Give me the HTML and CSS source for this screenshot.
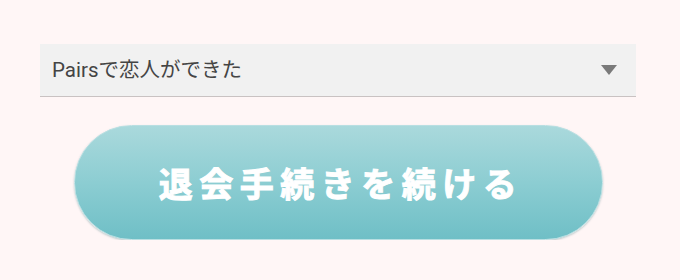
FILE: index.html
```html
<!DOCTYPE html>
<html lang="ja">
<head>
<meta charset="utf-8">
<link rel="stylesheet" href="styles.css">
</head>
<body>
<div class="wrap">
  <div class="select">
    <span class="select-text">Pairsで恋人ができた</span>
    <span class="arrow"></span>
  </div>
  <button class="btn">退会手続きを続ける</button>
</div>
</body>
</html>
```
FILE: styles.css
```css
html, body {
  margin: 0;
  padding: 0;
  background: #fff6f6;
}
.wrap {
  width: 596px;
  padding: 44px 0 0 40px;
  display: flex;
  flex-direction: column;
  align-items: center;
}
.select {
  box-sizing: border-box;
  width: 596px;
  height: 53px;
  background: #f1f1f1;
  border-bottom: 1px solid #c9c2c2;
  display: flex;
  align-items: center;
  justify-content: space-between;
  padding: 0 19px 0 12px;
}
.select-text {
  font-family: Roboto, "Noto Sans CJK JP", sans-serif;
  font-size: 20.5px;
  color: #444444;
  line-height: 1;
  margin-top: 1px;
}
.arrow {
  width: 0;
  height: 0;
  border-left: 8.5px solid transparent;
  border-right: 8.5px solid transparent;
  border-top: 10px solid #7a7a7a;
}
.btn {
  box-sizing: border-box;
  margin-top: 28px;
  width: 529px;
  height: 115px;
  border-radius: 58px;
  border: 1px solid #b9dfe2;
  background: linear-gradient(to bottom, #aad9dc 0%, #8ccdd2 50%, #6fbfc6 100%);
  box-shadow: 0 1px 2px rgba(60, 120, 125, 0.35);
  color: #ffffff;
  font-family: "Noto Sans CJK JP", sans-serif;
  font-weight: 700;
  font-size: 34px;
  letter-spacing: 6.5px;
  -webkit-text-stroke: 1px #ffffff;
  padding: 0 0 0 6px;
  line-height: 1;
}
```
